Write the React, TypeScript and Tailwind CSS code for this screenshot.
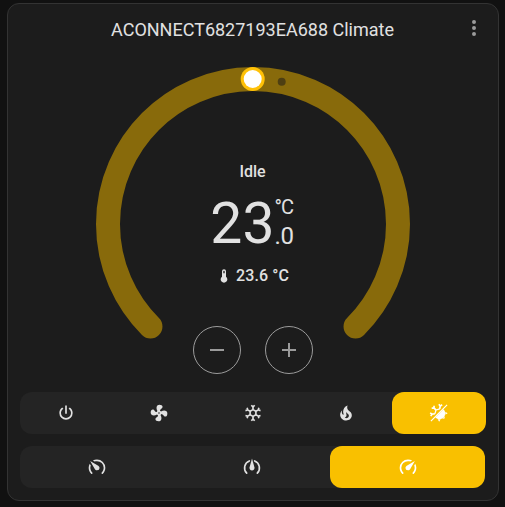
import React from "react";

const SNOW =
  "M20.79,13.95L18.46,14.57L16.46,13.44V10.56L18.46,9.43L20.79,10.05L21.31,8.12L19.54,7.65L20,5.88L18.07,5.36L17.45,7.69L15.45,8.82L13,7.38V5.12L14.71,3.41L13.29,2L12,3.29L10.71,2L9.29,3.41L11,5.12V7.38L8.5,8.82L6.5,7.69L5.92,5.36L4,5.88L4.47,7.65L2.7,8.12L3.22,10.05L5.55,9.43L7.55,10.56V13.45L5.55,14.58L3.22,13.96L2.7,15.89L4.47,16.36L4,18.12L5.93,18.64L6.55,16.31L8.55,15.18L11,16.62V18.88L9.29,20.59L10.71,22L12,20.71L13.29,22L14.7,20.59L13,18.88V16.62L15.5,15.17L17.5,16.3L18.12,18.63L20,18.12L19.53,16.35L21.3,15.88L20.79,13.95M9.5,10.56L12,9.11L14.5,10.56V13.44L12,14.89L9.5,13.44V10.56Z";
const POWER =
  "M16.56,5.44L15.11,6.89C16.84,7.94 18,9.83 18,12A6,6 0 0,1 12,18A6,6 0 0,1 6,12C6,9.83 7.16,7.94 8.88,6.88L7.44,5.44C5.36,6.88 4,9.28 4,12A8,8 0 0,0 12,20A8,8 0 0,0 20,12C20,9.28 18.64,6.88 16.56,5.44M13,3H11V13H13";
const FAN =
  "M12,11A1,1 0 0,0 11,12A1,1 0 0,0 12,13A1,1 0 0,0 13,12A1,1 0 0,0 12,11M12.5,2C17,2 17.11,5.57 14.75,6.75C13.76,7.24 13.32,8.29 13.13,9.22C13.61,9.42 14.03,9.73 14.35,10.13C18.05,8.13 22.03,8.92 22.03,12.5C22.03,17 18.46,17.1 17.28,14.73C16.78,13.74 15.72,13.3 14.79,13.11C14.59,13.59 14.28,14 13.88,14.34C15.87,18.03 15.08,22 11.5,22C7,22 6.91,18.42 9.27,17.24C10.25,16.75 10.69,15.71 10.89,14.79C10.4,14.59 9.97,14.27 9.65,13.87C5.96,15.85 2,15.07 2,11.5C2,7 5.56,6.89 6.74,9.26C7.24,10.25 8.29,10.68 9.22,10.87C9.41,10.39 9.73,9.97 10.14,9.65C8.15,5.96 8.94,2 12.5,2Z";
const FIRE =
  "M17.66 11.2C17.43 10.9 17.15 10.64 16.89 10.38C16.22 9.78 15.46 9.35 14.82 8.72C13.33 7.26 13 4.85 13.95 3C13 3.23 12.17 3.75 11.46 4.32C8.87 6.4 7.85 10.07 9.07 13.22C9.11 13.32 9.15 13.42 9.15 13.55C9.15 13.77 9 13.97 8.8 14.05C8.57 14.15 8.33 14.09 8.14 13.93C8.08 13.88 8.04 13.83 8 13.76C6.87 12.33 6.69 10.28 7.45 8.64C5.78 10 4.87 12.3 5 14.47C5.06 14.97 5.12 15.47 5.29 15.97C5.43 16.57 5.7 17.17 6 17.7C7.08 19.43 8.95 20.67 10.96 20.92C13.1 21.19 15.39 20.8 17.03 19.32C18.86 17.66 19.5 15 18.56 12.72L18.43 12.46C18.22 12 17.66 11.2 17.66 11.2M14.5 17.5C14.22 17.74 13.76 18 13.4 18.1C12.28 18.5 11.16 17.94 10.5 17.28C11.69 17 12.4 16.12 12.61 15.23C12.78 14.43 12.46 13.77 12.33 13C12.21 12.26 12.23 11.63 12.5 10.94C12.69 11.32 12.89 11.7 13.13 12C13.9 13 15.11 13.44 15.37 14.8C15.41 14.94 15.43 15.08 15.43 15.23C15.46 16.05 15.1 16.95 14.5 17.5H14.5Z";
const SPEED =
  "M12,16A3,3 0 0,1 9,13C9,11.88 9.61,10.9 10.5,10.39L20.21,4.77L14.68,14.35C14.18,15.33 13.17,16 12,16M12,3C13.81,3 15.5,3.5 16.97,4.32L14.87,5.53C14,5.19 13,5 12,5A8,8 0 0,0 4,13C4,15.21 4.89,17.21 6.34,18.65H6.35C6.74,19.04 6.74,19.67 6.35,20.06C5.96,20.45 5.32,20.45 4.93,20.07V20.07C3.12,18.26 2,15.76 2,13A10,10 0 0,1 12,3M22,13C22,15.76 20.88,18.26 19.07,20.07V20.07C18.68,20.45 18.05,20.45 17.66,20.06C17.27,19.67 17.27,19.04 17.66,18.65V18.65C19.11,17.2 20,15.21 20,13C20,12 19.81,11 19.46,10.1L20.67,8C21.5,9.5 22,11.18 22,13Z";
const THERMO =
  "M15 13V5A3 3 0 0 0 9 5V13A5 5 0 1 0 15 13M12 4A1 1 0 0 1 13 5V8H11V5A1 1 0 0 1 12 4Z";

function Icon({ children, size = 20, className = "" }: { children: React.ReactNode; size?: number; className?: string }) {
  return (
    <svg width={size} height={size} viewBox="0 0 24 24" fill="currentColor" className={`block shrink-0 ${className}`}>
      {children}
    </svg>
  );
}

const FLAKE_ARM = "M0 -5V-9M-2 -10.4L0 -8.4L2 -10.4";

function HeatCool() {
  return (
    <Icon>
      <g fill="none" stroke="currentColor" strokeWidth="2">
        <path d={FLAKE_ARM} transform="translate(12 12) rotate(10)" />
        <path d={FLAKE_ARM} transform="translate(12 12) rotate(-45)" />
        <path d={FLAKE_ARM} transform="translate(12 12) rotate(-100)" />
        <path d="M13 7L8.4 8.4L7 13" strokeWidth="1.5" />
      </g>
      <path d="M21.2 1.8L22.2 2.8L2.8 22.2L1.8 21.2Z" />
      <path d="M17.4 7.6A6.4 6.4 0 0 1 7.6 17.4Z" />
      <path d="M19.6 10.6L22.4 12.4L19.6 14.2ZM18.9 15.8L18.7 18.7L15.8 18.9ZM14 19.6L12.2 22.4L10.4 19.6Z" />
    </Icon>
  );
}

function SpeedMedium() {
  return (
    <Icon>
      <path d="M12 1.8L14.9 12.3A3 3 0 1 1 9.1 12.3Z" />
      <path
        d="M8.8 4.7A9 9 0 0 0 5.64 19.36M15.2 4.7A9 9 0 0 1 18.36 19.36"
        fill="none"
        stroke="currentColor"
        strokeWidth="2"
        strokeLinecap="round"
      />
    </Icon>
  );
}

function Option({ active = false, label, className = "flex-1", children }: { active?: boolean; label: string; className?: string; children: React.ReactNode }) {
  return (
    <button
      aria-label={label}
      className={`flex items-center justify-center rounded-xl ${className} ${active ? "bg-[#f9c000] text-white" : "text-[#e1e1e1]"}`}
    >
      {children}
    </button>
  );
}

function RoundButton({ label, d }: { label: string; d: string }) {
  return (
    <button aria-label={label} className="flex size-12 items-center justify-center rounded-full border border-[#9b9b9b] text-[#9b9b9b]">
      <Icon size={24}>
        <path d={d} />
      </Icon>
    </button>
  );
}

function Dial() {
  return (
    <div className="mt-[13px] grid h-[320px] w-[320px] self-center">
      <svg viewBox="-160 -160 320 320" className="col-start-1 row-start-1 size-[320px]">
        <path d="M-102.53 102.53A145 145 0 1 1 102.53 102.53" fill="none" stroke="#886a0b" strokeWidth="24" strokeLinecap="round" />
        <circle cx="28.7" cy="-142.2" r="4" fill="#4e3f12" />
        <circle cx="-0.3" cy="-145" r="12" fill="#ffc107" />
        <circle cx="-0.3" cy="-145" r="9" fill="#fff" />
      </svg>
      <div className="col-start-1 row-start-1 flex flex-col items-center pt-24">
        <div className="mr-px h-6 text-base leading-6 font-medium">Idle</div>
        <div className="mt-[11px] mr-[2px] flex h-[57px]">
          <span className="text-[57px] leading-[57px]">23</span>
          <span className="flex flex-col text-2xl leading-7">
            <span className="h-[27px] text-[20px] leading-[25px] tracking-[-0.8px]">°C</span>
            <span className="tracking-[-0.3px]">.0</span>
          </span>
        </div>
        <div className="mt-3 mr-px flex h-6 items-center gap-1 text-base leading-6 font-medium">
          <Icon size={16}>
            <path d={THERMO} />
          </Icon>
          <span className="tracking-[0.1px]">23.6 °C</span>
        </div>
        <div className="mt-[38px] flex gap-6">
          <RoundButton label="Decrease" d="M19,13H5V11H19V13Z" />
          <RoundButton label="Increase" d="M19,13H13V19H11V13H5V11H11V5H13V11H19V13Z" />
        </div>
      </div>
    </div>
  );
}

export default function App() {
  return (
    <div className="h-[507px] w-[505px] overflow-hidden bg-[#111111] pt-[3px] pl-[7px] font-[Roboto,sans-serif] text-[#e1e1e1]">
      <div className="flex h-[498px] w-[492px] flex-col rounded-xl border border-[#333333] bg-[#1c1c1c] px-3">
        <header className="flex h-[47px] items-center pt-[5px]">
          <h1 className="flex-1 pl-[23px] text-center text-lg leading-9 font-normal">ACONNECT6827193EA688 Climate</h1>
          <Icon size={24} className="-mt-[5px] text-[#9b9b9b]">
            <path d="M12,16A2,2 0 0,1 14,18A2,2 0 0,1 12,20A2,2 0 0,1 10,18A2,2 0 0,1 12,16M12,10A2,2 0 0,1 14,12A2,2 0 0,1 12,14A2,2 0 0,1 10,12A2,2 0 0,1 12,10M12,4A2,2 0 0,1 14,6A2,2 0 0,1 12,8A2,2 0 0,1 10,6A2,2 0 0,1 12,4Z" />
          </Icon>
        </header>
        <Dial />
        <div className="mt-2 flex h-[42px] shrink-0 rounded-xl bg-[#242424]">
          <Option label="Off" className="w-[92px]"><Icon><path d={POWER} /></Icon></Option>
          <Option label="Fan only" className="w-[94px]"><Icon><path d={FAN} /></Icon></Option>
          <Option label="Cool" className="w-[94px]"><Icon><path d={SNOW} /></Icon></Option>
          <Option label="Heat" className="w-[92px]"><Icon><path d={FIRE} /></Icon></Option>
          <Option label="Heat/Cool" className="w-[94px]" active><HeatCool /></Option>
        </div>
        <div className="mt-3 mr-px flex h-[42px] shrink-0 rounded-xl bg-[#242424]">
          <Option label="Low" className="w-[154px]"><Icon className="-scale-x-100"><path d={SPEED} /></Icon></Option>
          <Option label="Medium" className="w-[156px]"><SpeedMedium /></Option>
          <Option label="High" className="w-[155px]" active><Icon><path d={SPEED} /></Icon></Option>
        </div>
      </div>
    </div>
  );
}
